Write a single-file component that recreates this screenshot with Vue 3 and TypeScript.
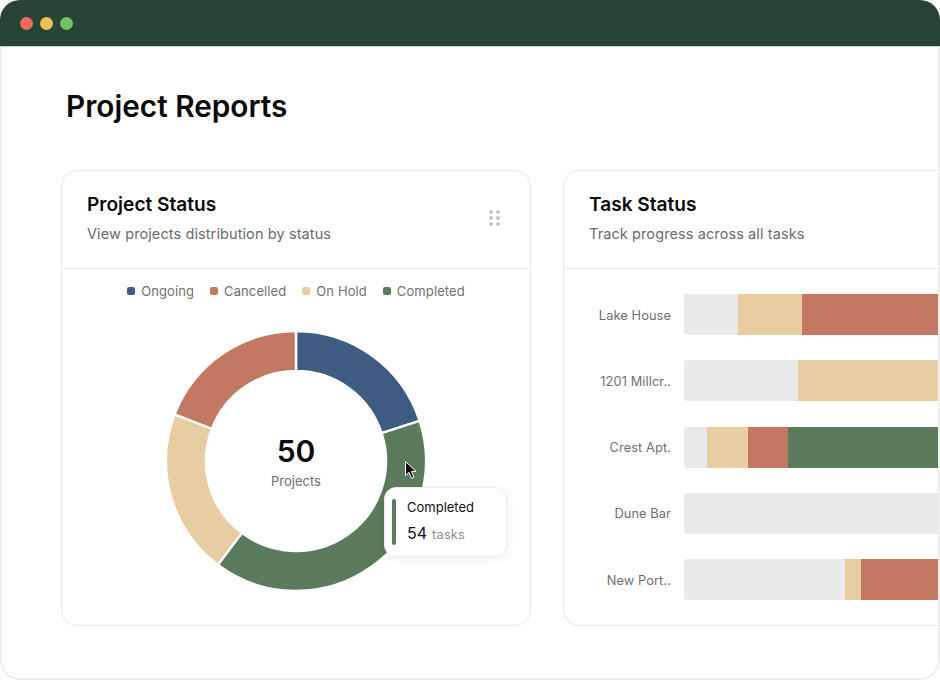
<script setup lang="ts">
interface Slice { color: string; start: number; end: number }
const slices: Slice[] = [
  { color: '#3e5c82', start: 0, end: 72 },
  { color: '#5c7a5c', start: 72, end: 217 },
  { color: '#e9cda2', start: 217, end: 291 },
  { color: '#c37863', start: 291, end: 360 },
]
const cx = 131
const cy = 131
function pt(r: number, a: number): string {
  const t = (a * Math.PI) / 180
  return `${(cx + r * Math.sin(t)).toFixed(2)} ${(cy - r * Math.cos(t)).toFixed(2)}`
}
function arc(s: Slice): string {
  const large = s.end - s.start > 180 ? 1 : 0
  return `M${pt(130, s.start)} A130 130 0 ${large} 1 ${pt(130, s.end)} L${pt(90, s.end)} A90 90 0 ${large} 0 ${pt(90, s.start)} Z`
}
const legend = [
  { label: 'Ongoing', color: '#3e5c82' },
  { label: 'Cancelled', color: '#c37863' },
  { label: 'On Hold', color: '#e9cda2' },
  { label: 'Completed', color: '#5c7a5c' },
]
const grey = '#e9e9e9'
const tan = '#e9cda2'
const red = '#c37863'
const green = '#5c7a5c'
const rows = [
  { label: 'Lake House', segs: [{ w: 54, c: grey }, { w: 64, c: tan }, { w: 200, c: red }] },
  { label: '1201 Millcr..', segs: [{ w: 114, c: grey }, { w: 200, c: tan }] },
  { label: 'Crest Apt.', segs: [{ w: 23, c: grey }, { w: 41, c: tan }, { w: 40, c: red }, { w: 200, c: green }] },
  { label: 'Dune Bar', segs: [{ w: 300, c: grey }] },
  { label: 'New Port..', segs: [{ w: 161, c: grey }, { w: 16, c: tan }, { w: 200, c: red }] },
]
</script>

<template>
  <div class="window">
    <header class="titlebar">
      <span class="dot red"></span>
      <span class="dot yellow"></span>
      <span class="dot green"></span>
    </header>
    <main class="content">
      <h1 class="page-title">Project Reports</h1>
      <div class="cards">
        <section class="card">
          <div class="card-head">
            <div>
              <h2>Project Status</h2>
              <p>View projects distribution by status</p>
            </div>
            <svg class="grip" width="11" height="16" viewBox="0 0 11 16">
              <circle v-for="n in 6" :key="n" :cx="n % 2 ? 2 : 9" :cy="2 + Math.floor((n - 1) / 2) * 6" r="1.9" fill="#c4c4c4" />
            </svg>
          </div>
          <div class="donut-body">
            <ul class="legend">
              <li v-for="l in legend" :key="l.label">
                <i :style="{ background: l.color }"></i>{{ l.label }}
              </li>
            </ul>
            <div class="donut">
              <svg width="262" height="262" viewBox="0 0 262 262">
                <path v-for="s in slices" :key="s.color" :d="arc(s)" :fill="s.color" stroke="#fff" stroke-width="2.4" />
              </svg>
              <div class="center">
                <strong>50</strong>
                <span>Projects</span>
              </div>
              <svg class="cursor" width="14" height="20" viewBox="0 0 14 20">
                <path d="M1.5 1.5 V15.5 L5 12.4 L7.6 18.4 L10 17.3 L7.4 11.4 H12 Z" fill="#111" stroke="#fff" stroke-width="1" stroke-linejoin="round" />
              </svg>
              <div class="tooltip">
                <i class="tip-bar"></i>
                <div class="tip-text">
                  <div class="tip-title">Completed</div>
                  <div class="tip-value"><b>54</b><span>tasks</span></div>
                </div>
              </div>
            </div>
          </div>
        </section>
        <section class="card">
          <div class="card-head">
            <div>
              <h2>Task Status</h2>
              <p>Track progress across all tasks</p>
            </div>
          </div>
          <div class="rows">
            <div v-for="r in rows" :key="r.label" class="row">
              <span class="row-label">{{ r.label }}</span>
              <div class="bar">
                <span v-for="(s, i) in r.segs" :key="i" :style="{ width: s.w + 'px', background: s.c }"></span>
              </div>
            </div>
          </div>
        </section>
      </div>
    </main>
  </div>
</template>

<style>
html, body { margin: 0; overflow: hidden; background: #fff; }
</style>

<style scoped>
.window {
  width: 940px;
  height: 680px;
  display: flex;
  flex-direction: column;
  font-family: Inter, "Liberation Sans", sans-serif;
  overflow: hidden;
}
.titlebar {
  flex: none;
  height: 46px;
  background: #274435;
  border-radius: 20px 20px 0 0;
  border-bottom: 1px solid #c9cfcb;
  display: flex;
  align-items: center;
  gap: 7px;
  padding-left: 20px;
}
.dot { width: 13px; height: 13px; border-radius: 50%; }
.dot.red { background: #ee6a5f; }
.dot.yellow { background: #eebf5c; }
.dot.green { background: #74c263; }
.content {
  flex: 1;
  min-height: 0;
  box-sizing: border-box;
  border: 2px solid #eeeeee;
  border-top: 0;
  border-radius: 0 0 20px 20px;
  padding: 40px 0 0 59px;
  overflow: hidden;
}
.page-title {
  margin: 0 0 45px 5px;
  font-size: 29.75px;
  line-height: 38px;
  font-weight: 600;
  color: #0a0a0a;
}
.cards { display: flex; gap: 32px; }
.card {
  flex: none;
  width: 470px;
  height: 456px;
  box-sizing: border-box;
  border: 1px solid #e8e8e8;
  border-radius: 16px;
  background: #fff;
}
.card-head {
  height: 98px;
  box-sizing: border-box;
  border-bottom: 1px solid #ececec;
  padding: 21px 30px 0 25px;
  display: flex;
  justify-content: space-between;
}
.card-head h2 {
  margin: 0;
  font-size: 19.1px;
  line-height: 24px;
  font-weight: 600;
  color: #0a0a0a;
}
.card-head p {
  margin: 8px 0 0;
  font-size: 14.5px;
  line-height: 20px;
  color: #6b6b6b;
  letter-spacing: 0.1px;
}
.grip { margin-top: 18px; }
.donut-body { display: flex; flex-direction: column; align-items: center; }
.legend {
  list-style: none;
  margin: 14px 0 0;
  padding: 0;
  display: flex;
  gap: 16px;
  font-size: 13px;
  line-height: 16px;
  color: #707070;
  letter-spacing: 0.1px;
}
.legend li { display: flex; align-items: center; gap: 6px; }
.legend i { width: 8px; height: 8px; border-radius: 2px; display: block; }
.donut { position: relative; width: 262px; height: 262px; margin-top: 31px; }
.donut svg { display: block; }
.center {
  position: absolute;
  inset: 0;
  display: flex;
  flex-direction: column;
  align-items: center;
  justify-content: center;
}
.center strong { font-size: 30px; line-height: 36px; font-weight: 600; color: #0a0a0a; }
.center span { font-size: 13px; line-height: 18px; margin-top: 3px; color: #707070; }
.cursor { position: absolute; left: 239px; top: 130px; }
.tooltip {
  position: absolute;
  left: 219px;
  top: 157px;
  width: 123px;
  height: 70px;
  box-sizing: border-box;
  background: #fff;
  border: 1px solid #eee;
  border-radius: 12px;
  box-shadow: 0 2px 8px rgba(0, 0, 0, 0.08);
  display: flex;
  align-items: center;
  gap: 11px;
  padding-left: 7px;
}
.tip-bar { width: 4px; height: 46px; border-radius: 2px; background: #5c7a5c; display: block; }
.tip-text { padding-bottom: 2px; }
.tip-title { font-size: 13px; line-height: 16px; color: #111; }
.tip-value { margin-top: 9px; display: flex; align-items: flex-start; gap: 5px; }
.tip-value b { font-size: 16px; font-weight: 400; line-height: 18px; color: #111; }
.tip-value span { font-size: 12.8px; line-height: 16px; margin-top: 3px; color: #8c8c8c; letter-spacing: 0.2px; }
.rows {
  padding-top: 25px;
  display: flex;
  flex-direction: column;
  gap: 25.25px;
}
.row { display: flex; align-items: center; }
.row-label {
  width: 108px;
  padding: 1px 1px 0 0;
  box-sizing: border-box;
  text-align: right;
  font-size: 12.8px;
  color: #707070;
  letter-spacing: 0.1px;
  flex: none;
}
.bar {
  flex: none;
  margin-left: 12px;
  width: 300px;
  height: 41px;
  border-radius: 4px 0 0 4px;
  overflow: hidden;
  background: #e9e9e9;
  display: flex;
}
.bar span { flex: none; display: block; height: 100%; }
</style>
